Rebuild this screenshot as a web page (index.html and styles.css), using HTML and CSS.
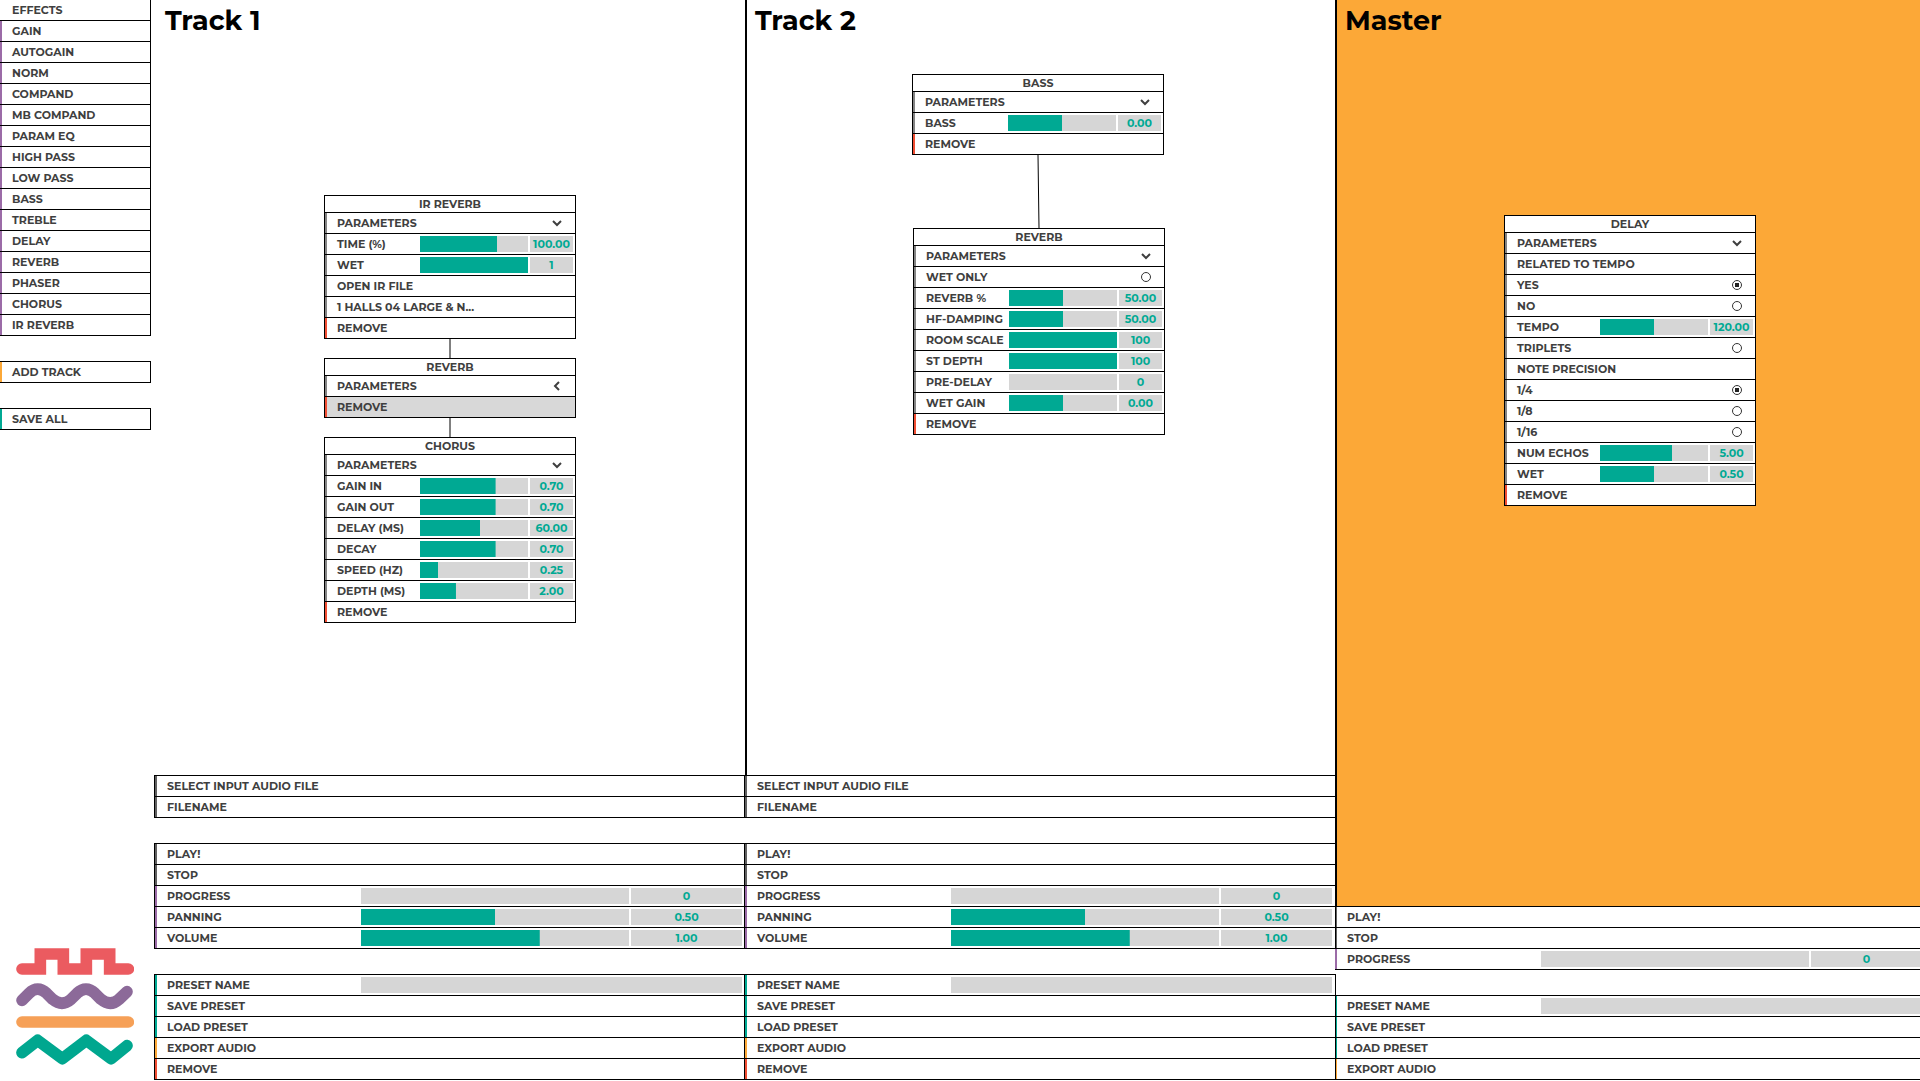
FILE: index.html
```html
<!DOCTYPE html>
<html lang="en">
<head>
<meta charset="utf-8">
<meta name="viewport" content="width=device-width, initial-scale=1">
<title>Audio Effects Mixer</title>
<link rel="stylesheet" href="styles.css">
</head>
<body>
<svg class="defs" aria-hidden="true">
  <symbol id="chev-down" viewBox="0 0 10 10"><path d="M1 3 L5 7 L9 3"/></symbol>
  <symbol id="chev-left" viewBox="0 0 10 10"><path d="M7 1 L3 5 L7 9"/></symbol>
</svg>
<div class="app">
  <aside class="sidebar">
    <nav class="menu">
      <div class="row">EFFECTS</div>
      <button class="row purple">GAIN</button>
      <button class="row purple">AUTOGAIN</button>
      <button class="row purple">NORM</button>
      <button class="row purple">COMPAND</button>
      <button class="row purple">MB COMPAND</button>
      <button class="row purple">PARAM EQ</button>
      <button class="row purple">HIGH PASS</button>
      <button class="row purple">LOW PASS</button>
      <button class="row purple">BASS</button>
      <button class="row purple">TREBLE</button>
      <button class="row purple">DELAY</button>
      <button class="row purple">REVERB</button>
      <button class="row purple">PHASER</button>
      <button class="row purple">CHORUS</button>
      <button class="row purple">IR REVERB</button>
    </nav>
    <div class="menu boxed"><button class="row orange">ADD TRACK</button></div>
    <div class="menu boxed"><button class="row teal">SAVE ALL</button></div>
    <svg class="logo" viewBox="48 54 354 354" role="img" aria-label="Logo">
      <g fill="none" stroke-width="35" stroke-linecap="round">
        <path stroke="#eb5b60" d="M66 117H121V72H190V117H259V72H329V117H385"/>
        <path stroke="#8c6a99" d="M66 211L87 190Q113 165 140 190L158 208Q186 231 213 208L231 190Q258 165 285 190L303 208Q331 231 357 208L381 185"/>
        <path stroke="#f6a057" d="M66 276H385"/>
        <path stroke="#00a78f" stroke-linejoin="round" d="M66 368L113 331L187 386L259 331L333 386L381 347"/>
      </g>
    </svg>
  </aside>

  <main class="tracks">
    <section class="track">
      <div class="canvas">
        <h2>Track 1</h2>
        <svg class="wires" aria-hidden="true"><path d="M0 339V358M0 418V437"/></svg>
        <div class="node n-ir">
          <h3>IR REVERB</h3>
          <button class="row grey end">PARAMETERS<svg class="icon"><use href="#chev-down"/></svg></button>
          <div class="row grey slider"><label for="ir-time">TIME (%)</label><input id="ir-time" type="range" style="--fill:71.3%"><input class="value" aria-label="Time value" value="100.00"></div>
          <div class="row grey slider"><label for="ir-wet">WET</label><input id="ir-wet" type="range" style="--fill:100%"><input class="value" aria-label="Wet value" value="1"></div>
          <button class="row grey">OPEN IR FILE</button>
          <button class="row grey">1 HALLS 04 LARGE &amp; N...</button>
          <button class="row red">REMOVE</button>
        </div>
        <div class="node n-rev1">
          <h3>REVERB</h3>
          <button class="row grey end">PARAMETERS<svg class="icon"><use href="#chev-left"/></svg></button>
          <button class="row red active">REMOVE</button>
        </div>
        <div class="node n-chorus">
          <h3>CHORUS</h3>
          <button class="row grey end">PARAMETERS<svg class="icon"><use href="#chev-down"/></svg></button>
          <div class="row grey slider"><label for="ch-in">GAIN IN</label><input id="ch-in" type="range" style="--fill:70%"><input class="value" aria-label="Gain in value" value="0.70"></div>
          <div class="row grey slider"><label for="ch-out">GAIN OUT</label><input id="ch-out" type="range" style="--fill:70%"><input class="value" aria-label="Gain out value" value="0.70"></div>
          <div class="row grey slider"><label for="ch-delay">DELAY (MS)</label><input id="ch-delay" type="range" style="--fill:55.6%"><input class="value" aria-label="Delay value" value="60.00"></div>
          <div class="row grey slider"><label for="ch-decay">DECAY</label><input id="ch-decay" type="range" style="--fill:70%"><input class="value" aria-label="Decay value" value="0.70"></div>
          <div class="row grey slider"><label for="ch-speed">SPEED (HZ)</label><input id="ch-speed" type="range" style="--fill:16.7%"><input class="value" aria-label="Speed value" value="0.25"></div>
          <div class="row grey slider"><label for="ch-depth">DEPTH (MS)</label><input id="ch-depth" type="range" style="--fill:33.3%"><input class="value" aria-label="Depth value" value="2.00"></div>
          <button class="row red">REMOVE</button>
        </div>
      </div>
      <div class="panels">
        <div class="panel">
          <button class="row dark">SELECT INPUT AUDIO FILE</button>
          <div class="row dark">FILENAME</div>
        </div>
        <div class="panel">
          <button class="row dark">PLAY!</button>
          <button class="row dark">STOP</button>
          <div class="row purple slider"><label for="t1-prog">PROGRESS</label><input id="t1-prog" type="range" style="--fill:0%"><input class="value" aria-label="Progress value" value="0"></div>
          <div class="row purple slider"><label for="t1-pan">PANNING</label><input id="t1-pan" type="range" style="--fill:50%"><input class="value" aria-label="Panning value" value="0.50"></div>
          <div class="row purple slider"><label for="t1-vol">VOLUME</label><input id="t1-vol" type="range" style="--fill:66.7%"><input class="value" aria-label="Volume value" value="1.00"></div>
        </div>
        <div class="panel">
          <div class="row teal slider"><label for="t1-name">PRESET NAME</label><input id="t1-name" class="text" type="text"></div>
          <button class="row teal">SAVE PRESET</button>
          <button class="row teal">LOAD PRESET</button>
          <button class="row orange">EXPORT AUDIO</button>
          <button class="row red">REMOVE</button>
        </div>
      </div>
    </section>

    <section class="track divided raised">
      <div class="canvas">
        <h2>Track 2</h2>
        <svg class="wires" aria-hidden="true"><path d="M-2 155L-1 228"/></svg>
        <div class="node n-bass">
          <h3>BASS</h3>
          <button class="row grey end">PARAMETERS<svg class="icon"><use href="#chev-down"/></svg></button>
          <div class="row grey slider"><label for="bass">BASS</label><input id="bass" type="range" style="--fill:50%"><input class="value" aria-label="Bass value" value="0.00"></div>
          <button class="row red">REMOVE</button>
        </div>
        <div class="node n-rev2">
          <h3>REVERB</h3>
          <button class="row grey end">PARAMETERS<svg class="icon"><use href="#chev-down"/></svg></button>
          <label class="row grey end">WET ONLY<input class="dot" type="checkbox"></label>
          <div class="row grey slider"><label for="rv-rev">REVERB %</label><input id="rv-rev" type="range" style="--fill:50%"><input class="value" aria-label="Reverb value" value="50.00"></div>
          <div class="row grey slider"><label for="rv-hf">HF-DAMPING</label><input id="rv-hf" type="range" style="--fill:50%"><input class="value" aria-label="HF-damping value" value="50.00"></div>
          <div class="row grey slider"><label for="rv-room">ROOM SCALE</label><input id="rv-room" type="range" style="--fill:100%"><input class="value" aria-label="Room scale value" value="100"></div>
          <div class="row grey slider"><label for="rv-st">ST DEPTH</label><input id="rv-st" type="range" style="--fill:100%"><input class="value" aria-label="Stereo depth value" value="100"></div>
          <div class="row grey slider"><label for="rv-pre">PRE-DELAY</label><input id="rv-pre" type="range" style="--fill:0%"><input class="value" aria-label="Pre-delay value" value="0"></div>
          <div class="row grey slider"><label for="rv-gain">WET GAIN</label><input id="rv-gain" type="range" style="--fill:50%"><input class="value" aria-label="Wet gain value" value="0.00"></div>
          <button class="row red">REMOVE</button>
        </div>
      </div>
      <div class="panels">
        <div class="panel">
          <button class="row dark">SELECT INPUT AUDIO FILE</button>
          <div class="row dark">FILENAME</div>
        </div>
        <div class="panel">
          <button class="row dark">PLAY!</button>
          <button class="row dark">STOP</button>
          <div class="row purple slider"><label for="t2-prog">PROGRESS</label><input id="t2-prog" type="range" style="--fill:0%"><input class="value" aria-label="Progress value" value="0"></div>
          <div class="row purple slider"><label for="t2-pan">PANNING</label><input id="t2-pan" type="range" style="--fill:50%"><input class="value" aria-label="Panning value" value="0.50"></div>
          <div class="row purple slider"><label for="t2-vol">VOLUME</label><input id="t2-vol" type="range" style="--fill:66.7%"><input class="value" aria-label="Volume value" value="1.00"></div>
        </div>
        <div class="panel">
          <div class="row teal slider"><label for="t2-name">PRESET NAME</label><input id="t2-name" class="text" type="text"></div>
          <button class="row teal">SAVE PRESET</button>
          <button class="row teal">LOAD PRESET</button>
          <button class="row orange">EXPORT AUDIO</button>
          <button class="row red">REMOVE</button>
        </div>
      </div>
    </section>

    <section class="track divided master">
      <div class="canvas">
        <h2>Master</h2>
        <div class="node n-delay">
          <h3>DELAY</h3>
          <button class="row grey end">PARAMETERS<svg class="icon"><use href="#chev-down"/></svg></button>
          <div class="row grey">RELATED TO TEMPO</div>
          <label class="row grey end">YES<input class="dot" type="radio" name="tempo" checked></label>
          <label class="row grey end">NO<input class="dot" type="radio" name="tempo"></label>
          <div class="row grey slider"><label for="dl-tempo">TEMPO</label><input id="dl-tempo" type="range" style="--fill:50%"><input class="value" aria-label="Tempo value" value="120.00"></div>
          <label class="row grey end">TRIPLETS<input class="dot" type="checkbox"></label>
          <div class="row grey">NOTE PRECISION</div>
          <label class="row grey end">1/4<input class="dot" type="radio" name="note" checked></label>
          <label class="row grey end">1/8<input class="dot" type="radio" name="note"></label>
          <label class="row grey end">1/16<input class="dot" type="radio" name="note"></label>
          <div class="row grey slider"><label for="dl-num">NUM ECHOS</label><input id="dl-num" type="range" style="--fill:66.7%"><input class="value" aria-label="Number of echos value" value="5.00"></div>
          <div class="row grey slider"><label for="dl-wet">WET</label><input id="dl-wet" type="range" style="--fill:50%"><input class="value" aria-label="Wet value" value="0.50"></div>
          <button class="row red">REMOVE</button>
        </div>
      </div>
      <div class="panels">
        <div class="panel">
          <button class="row dark">PLAY!</button>
          <button class="row dark">STOP</button>
          <div class="row purple slider"><label for="m-prog">PROGRESS</label><input id="m-prog" type="range" style="--fill:0%"><input class="value" aria-label="Progress value" value="0"></div>
        </div>
        <div class="panel">
          <div class="row teal slider"><label for="m-name">PRESET NAME</label><input id="m-name" class="text" type="text"></div>
          <button class="row teal">SAVE PRESET</button>
          <button class="row teal">LOAD PRESET</button>
          <button class="row orange">EXPORT AUDIO</button>
        </div>
      </div>
    </section>
  </main>
</div>
</body>
</html>
```
FILE: styles.css
```css
* { box-sizing: border-box; }

:root {
  --ink: #3f3f3f;
  --teal: #00a993;
  --field: #d6d6d6;
  --orange: #fca837;
}

body {
  margin: 0;
  background: #fff;
  color: var(--ink);
  font: 700 11px/20px Montserrat, Inter, "Open Sans", sans-serif;
  overflow-x: clip;
}

button, input { font: inherit; color: inherit; }

.defs { display: none; }

.app {
  display: grid;
  grid-template-columns: 155px minmax(0, 1fr);
  min-height: 100vh;
}

/* sidebar */
.sidebar {
  display: flex;
  flex-direction: column;
  width: 151px;
  height: 100vh;
  gap: 25px;
}

.menu { border-right: 1px solid #000; }
.boxed { border-top: 1px solid #000; }

.logo {
  width: 118px;
  height: 118px;
  margin: auto 0 15px 16px;
}

/* rows */
.row {
  --stripe: transparent;
  display: flex;
  align-items: center;
  width: 100%;
  height: 21px;
  margin: 0;
  padding: 0 3px 0 12px;
  border: 0;
  border-bottom: 1px solid #000;
  background: #fff;
  box-shadow: inset 2px 0 0 var(--stripe);
  text-align: left;
  white-space: nowrap;
}

.purple { --stripe: #9b6ba7; }
.orange { --stripe: var(--orange); }
.teal { --stripe: var(--teal); }
.red { --stripe: #f04e33; }
.grey { --stripe: #848484; }
.dark { --stripe: #606060; }
.active { background: #d8d8d8; }

.end {
  justify-content: space-between;
  padding-right: 13px;
}

.slider {
  display: grid;
  grid-template-columns: 192fr 268fr 111fr;
  column-gap: 2px;
}

.slider input {
  display: block;
  width: 100%;
  min-width: 0;
  height: 16px;
  margin: 0;
  padding: 0;
  border: 0;
  border-radius: 0;
  background: var(--field);
}

.slider input[type="range"] {
  appearance: none;
  background: linear-gradient(var(--teal), var(--teal)) 0 0 / var(--fill) 100% no-repeat var(--field);
}

input[type="range"]::-webkit-slider-thumb {
  appearance: none;
  width: 1px;
  height: 16px;
  opacity: 0;
}

.slider .value {
  color: var(--teal);
  text-align: center;
}

.slider .text { grid-column: 2 / 4; }

.icon {
  width: 10px;
  height: 10px;
  fill: none;
  stroke: var(--ink);
  stroke-width: 2;
}

.dot {
  appearance: none;
  display: grid;
  place-items: center;
  width: 10px;
  height: 10px;
  margin: 0;
  border: 1px solid #333;
  border-radius: 50%;
}

.dot:checked::before {
  content: "";
  width: 4px;
  height: 4px;
  background: #222;
}

/* tracks */
.tracks {
  display: grid;
  grid-template-columns: repeat(3, minmax(0, 1fr));
  margin-right: -5px;
}

.track {
  display: flex;
  flex-direction: column;
  position: relative;
}

.raised { z-index: 1; }

.canvas {
  flex: 1;
  min-height: 640px;
  border-left: 2px solid transparent;
}

.divided .canvas { border-left-color: #000; }
.master .canvas { background: var(--orange) padding-box; }

h2 {
  margin: 0;
  padding-left: 8px;
  color: #000;
  font-size: 27px;
  font-weight: 700;
  line-height: 42px;
}

.wires {
  position: absolute;
  top: 0;
  left: 50%;
  width: 1px;
  height: 1px;
  overflow: visible;
  fill: none;
  stroke: #000;
}

.node {
  position: absolute;
  left: calc(50% - 126px);
  width: 252px;
  border: 1px solid #000;
  border-bottom: 0;
  background: #fff;
}

.node h3 {
  margin: 0;
  border-bottom: 1px solid #000;
  font-size: 11px;
  line-height: 16px;
  text-align: center;
}

.node .slider {
  grid-template-columns: 81px 108px 43px;
  padding-right: 2px;
}

.n-ir { top: 195px; }
.n-rev1 { top: 358px; }
.n-chorus { top: 437px; }
.n-bass { top: 74px; left: calc(50% - 128px); }
.n-rev2 { top: 228px; left: calc(50% - 127px); }
.n-delay { top: 215px; }

/* bottom panels */
.panels {
  display: flex;
  flex-direction: column;
  gap: 25px;
  padding-bottom: 1px;
}

.panel {
  margin: 0 -1px;
  border: 1px solid #000;
  border-bottom: 0;
}

.master .panel {
  margin-left: 0;
  border-left: 0;
}
```
